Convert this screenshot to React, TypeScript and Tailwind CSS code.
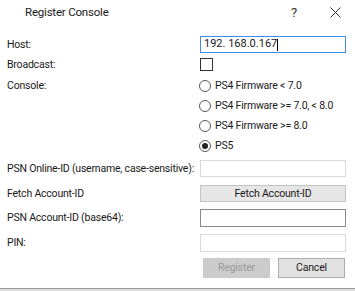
import { ReactNode } from "react";
import clsx from "clsx";

const FONT =
  "font-['Roboto','Liberation_Sans',sans-serif] text-[10.5px] tracking-[-0.2px] text-[#1a1a1a]";

const Row = (props: { label?: string; children: ReactNode; className?: string }) => (
  <div className={clsx("flex items-center", props.className)}>
    <div className="w-[200px] shrink-0 pl-[7px] whitespace-nowrap">{props.label}</div>
    <div className="w-[146px] flex items-center">{props.children}</div>
  </div>
);

const TextBox = (props: { value?: string; focused?: boolean; dark?: boolean; h: string }) => (
  <div
    className={clsx(
      "w-[146px] border flex items-center pl-[3px] bg-white text-[11px] tracking-normal",
      props.h,
      props.focused ? "border-[#3c8fe0]" : props.dark ? "border-[#8a8a8a]" : "border-[#d9d9d9]",
    )}
  >
    {props.value}
    {props.focused && <span className="w-px h-[12px] bg-black" />}
  </div>
);

const Radio = (props: { label: string; checked?: boolean }) => (
  <div className="flex items-center h-[20px] -ml-px">
    <span className="w-[12px] h-[12px] rounded-full border border-[#5a5a5a] flex items-center justify-center">
      {props.checked && <span className="w-[6px] h-[6px] rounded-full bg-[#222]" />}
    </span>
    <span className="ml-[4px] whitespace-nowrap">{props.label}</span>
  </div>
);

const CONSOLES = [
  { label: "PS4 Firmware < 7.0" },
  { label: "PS4 Firmware >= 7.0, < 8.0" },
  { label: "PS4 Firmware >= 8.0" },
  { label: "PS5", checked: true },
];

export default function App() {
  return (
    <div className={clsx("w-[355px] h-[291px] bg-white flex flex-col overflow-hidden", FONT)}>
      <div className="h-[25px] flex items-center shrink-0">
        <span className="pl-[25px] text-[11.5px] grow">Register Console</span>
        <span className="w-[14px] text-[13px] text-[#333]">?</span>
        <span className="ml-[25px] mr-[14px] text-[#333]">
          <svg width="11" height="11" viewBox="0 0 11 11">
            <path d="M0.5 0.5 L10.5 10.5 M10.5 0.5 L0.5 10.5" stroke="#333" strokeWidth="1" />
          </svg>
        </span>
      </div>

      <Row label="Host:" className="mt-[11px]">
        <TextBox value="192. 168.0.167" focused h="h-[17px]" />
      </Row>
      <Row label="Broadcast:" className="mt-[4px] h-[15px]">
        <span className="w-[13px] h-[13px] border border-[#333] bg-white" />
      </Row>
      <div className="flex mt-[4px]">
        <div className="w-[200px] shrink-0 pl-[7px] h-[20px] flex items-center">Console:</div>
        <div className="flex flex-col">
          {CONSOLES.map((c) => (
            <Radio key={c.label} label={c.label} checked={c.checked} />
          ))}
        </div>
      </div>
      <Row label="PSN Online-ID (username, case-sensitive):" className="mt-[4px]">
        <TextBox h="h-[17px]" />
      </Row>
      <Row label="Fetch Account-ID" className="mt-[8px]">
        <button className="w-[146px] h-[17px] border border-[#c4c4c4] bg-[#e6e6e6] flex items-center justify-center">
          Fetch Account-ID
        </button>
      </Row>
      <Row label="PSN Account-ID (base64):" className="mt-[7px]">
        <TextBox dark h="h-[18px]" />
      </Row>
      <Row label="PIN:" className="mt-[7px]">
        <TextBox h="h-[18px]" />
      </Row>
      <div className="flex justify-end gap-[8px] mt-[6px] pr-[10px]">
        <button className="w-[67px] h-[20px] border border-[#c9c9c9] bg-[#cccccc] text-[#9a9a9a]">
          Register
        </button>
        <button className="w-[67px] h-[20px] border border-[#adadad] bg-[#e1e1e1]">Cancel</button>
      </div>
      <div className="mt-auto h-[3px] border-t border-[#9a9a9a] bg-[#dcdcdc]" />
    </div>
  );
}
